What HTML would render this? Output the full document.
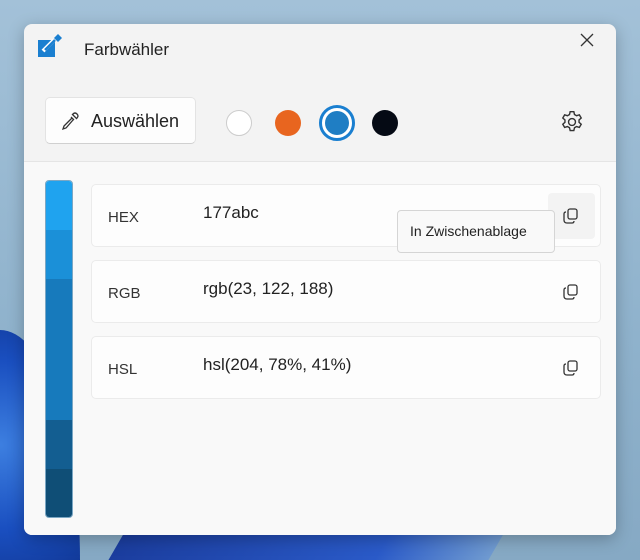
<!DOCTYPE html>
<html><head><meta charset="utf-8"><style>
*{margin:0;padding:0;box-sizing:border-box}
html,body{width:640px;height:560px;overflow:hidden}
body{position:relative;font-family:"Liberation Sans",sans-serif;
background:linear-gradient(180deg,#a3c1d8 0%,#8fb2cc 60%,#86a9c4 100%);}
.bloom{position:absolute;left:0;top:330px;width:80px;height:230px;border-radius:0 100% 0 0/0 100% 0 0;background:radial-gradient(circle at 0% 50%,#3d7fe0,#1a4fc0 60%,#123a9a);}
.bloom2{position:absolute;left:120px;top:520px;width:380px;height:40px;background:linear-gradient(90deg,#1b3d9e,#2a5ac8 70%,#6f9ad0);transform:skewX(-30deg);}
.win{position:absolute;left:24px;top:24px;width:592px;height:511px;border-radius:8px;background:#f3f3f3;overflow:hidden;box-shadow:0 4px 16px rgba(0,0,0,.25);}
.title{position:absolute;left:60px;top:16px;font-size:17px;color:#222}
.content{position:absolute;left:0;top:137px;width:592px;height:374px;background:#f9f9f9;border-top:1px solid #e5e5e5}
.btn{position:absolute;left:21px;top:73px;width:151px;height:47px;background:#fdfdfd;border:1px solid #e3e3e3;border-bottom-color:#d0d0d0;border-radius:5px;font-size:18px;color:#222}
.sw{position:absolute;border-radius:50%}
.card{position:absolute;left:67px;width:510px;height:63px;background:#fdfdfd;border:1px solid #ebebeb;border-radius:5px}
.lab{position:absolute;left:16px;top:24px;font-size:15px;color:#333}
.val{position:absolute;left:111px;top:18px;font-size:17px;color:#222}
.cp{position:absolute;left:470px;top:22px}
.bar{position:absolute;left:21px;top:18px;width:28px;height:338px;border-radius:4px;overflow:hidden;border:1px solid #7ba7c4}
.bar div{width:100%}
</style></head><body>
<div class="bloom"></div><div class="bloom2"></div>
<div class="win">
<svg style="position:absolute;left:13px;top:9px" width="26" height="26" viewBox="0 0 26 26"><rect x="1" y="7" width="17" height="17" fill="#1a7fd0"/><path d="M6 18 L17 7" stroke="#fff" stroke-width="4"/><path d="M8 17 L18 7" stroke="#1a7fd0" stroke-width="2.5"/><path d="M17 5 L21 1 L25 5 L21 9 Z" fill="#1a7fd0"/></svg>
<div class="title">Farbwähler</div>
<svg style="position:absolute;left:556px;top:9px" width="14" height="14"><path d="M1 1L13 13M13 1L1 13" stroke="#333" stroke-width="1.3"/></svg>
<div class="btn"><svg style="position:absolute;left:14px;top:13px" width="20" height="20" viewBox="0 0 20 20" fill="none" stroke="#333" stroke-width="1.3"><path d="M12 3 L17 8 M11 6 L14 9 M12 7 L4 15 L3 18 L6 17 L13 9 M13 3 Q15 1 17 3 Q19 5 17 7"/></svg><span style="position:absolute;left:45px;top:13px">Auswählen</span></div>
<div class="sw" style="left:202px;top:86px;width:26px;height:26px;background:#fff;border:1px solid #ccc"></div>
<div class="sw" style="left:251px;top:86px;width:26px;height:26px;background:#e8651f"></div>
<div class="sw" style="left:295px;top:81px;width:36px;height:36px;border:3px solid #1a7fd0;background:#fff"></div>
<div class="sw" style="left:301px;top:87px;width:24px;height:24px;background:#1f7ec4"></div>
<div class="sw" style="left:348px;top:86px;width:26px;height:26px;background:#050a14"></div>
<svg style="position:absolute;left:535px;top:85px" width="26" height="26" viewBox="0 0 24 24" fill="none" stroke="#333" stroke-width="1.3"><circle cx="12" cy="12" r="3.2"/><path d="M10.3 2.5h3.4l.6 2.6 1.9 1.1 2.6-.8 1.7 2.9-2 1.8v2.2l2 1.8-1.7 2.9-2.6-.8-1.9 1.1-.6 2.6h-3.4l-.6-2.6-1.9-1.1-2.6.8-1.7-2.9 2-1.8v-2.2l-2-1.8 1.7-2.9 2.6.8 1.9-1.1z"/></svg>
<div class="content">
<div class="bar"><div style="height:49px;background:#1fa3ef"></div><div style="height:49px;background:#1b90d8"></div><div style="height:141px;background:#177abc"></div><div style="height:49px;background:#135e91"></div><div style="height:50px;background:#0f4e76"></div></div>
<div class="card" style="top:22px"><div class="lab">HEX</div><div class="val">177abc</div>
<div style="position:absolute;left:456px;top:8px;width:47px;height:46px;background:#f3f3f3;border-radius:4px"></div>
<svg class="cp" width="18" height="18" viewBox="0 0 18 18" fill="none" stroke="#333" stroke-width="1.3"><rect x="6" y="2" width="9" height="10" rx="2"/><path d="M4 5 Q2 5 2 7 V13 Q2 16 5 16 H10 Q12 16 12 14"/></svg></div>
<div class="card" style="top:98px"><div class="lab">RGB</div><div class="val">rgb(23, 122, 188)</div>
<svg class="cp" width="18" height="18" viewBox="0 0 18 18" fill="none" stroke="#333" stroke-width="1.3"><rect x="6" y="2" width="9" height="10" rx="2"/><path d="M4 5 Q2 5 2 7 V13 Q2 16 5 16 H10 Q12 16 12 14"/></svg></div>
<div class="card" style="top:174px"><div class="lab">HSL</div><div class="val">hsl(204, 78%, 41%)</div>
<svg class="cp" width="18" height="18" viewBox="0 0 18 18" fill="none" stroke="#333" stroke-width="1.3"><rect x="6" y="2" width="9" height="10" rx="2"/><path d="M4 5 Q2 5 2 7 V13 Q2 16 5 16 H10 Q12 16 12 14"/></svg></div>
<div style="position:absolute;left:373px;top:48px;width:158px;height:43px;background:#f9f9f9;border:1px solid #d5d5d5;border-radius:4px;font-size:14px;color:#222;padding:12px 0 0 12px">In Zwischenablage</div>
</div>
</div>
</body></html>
